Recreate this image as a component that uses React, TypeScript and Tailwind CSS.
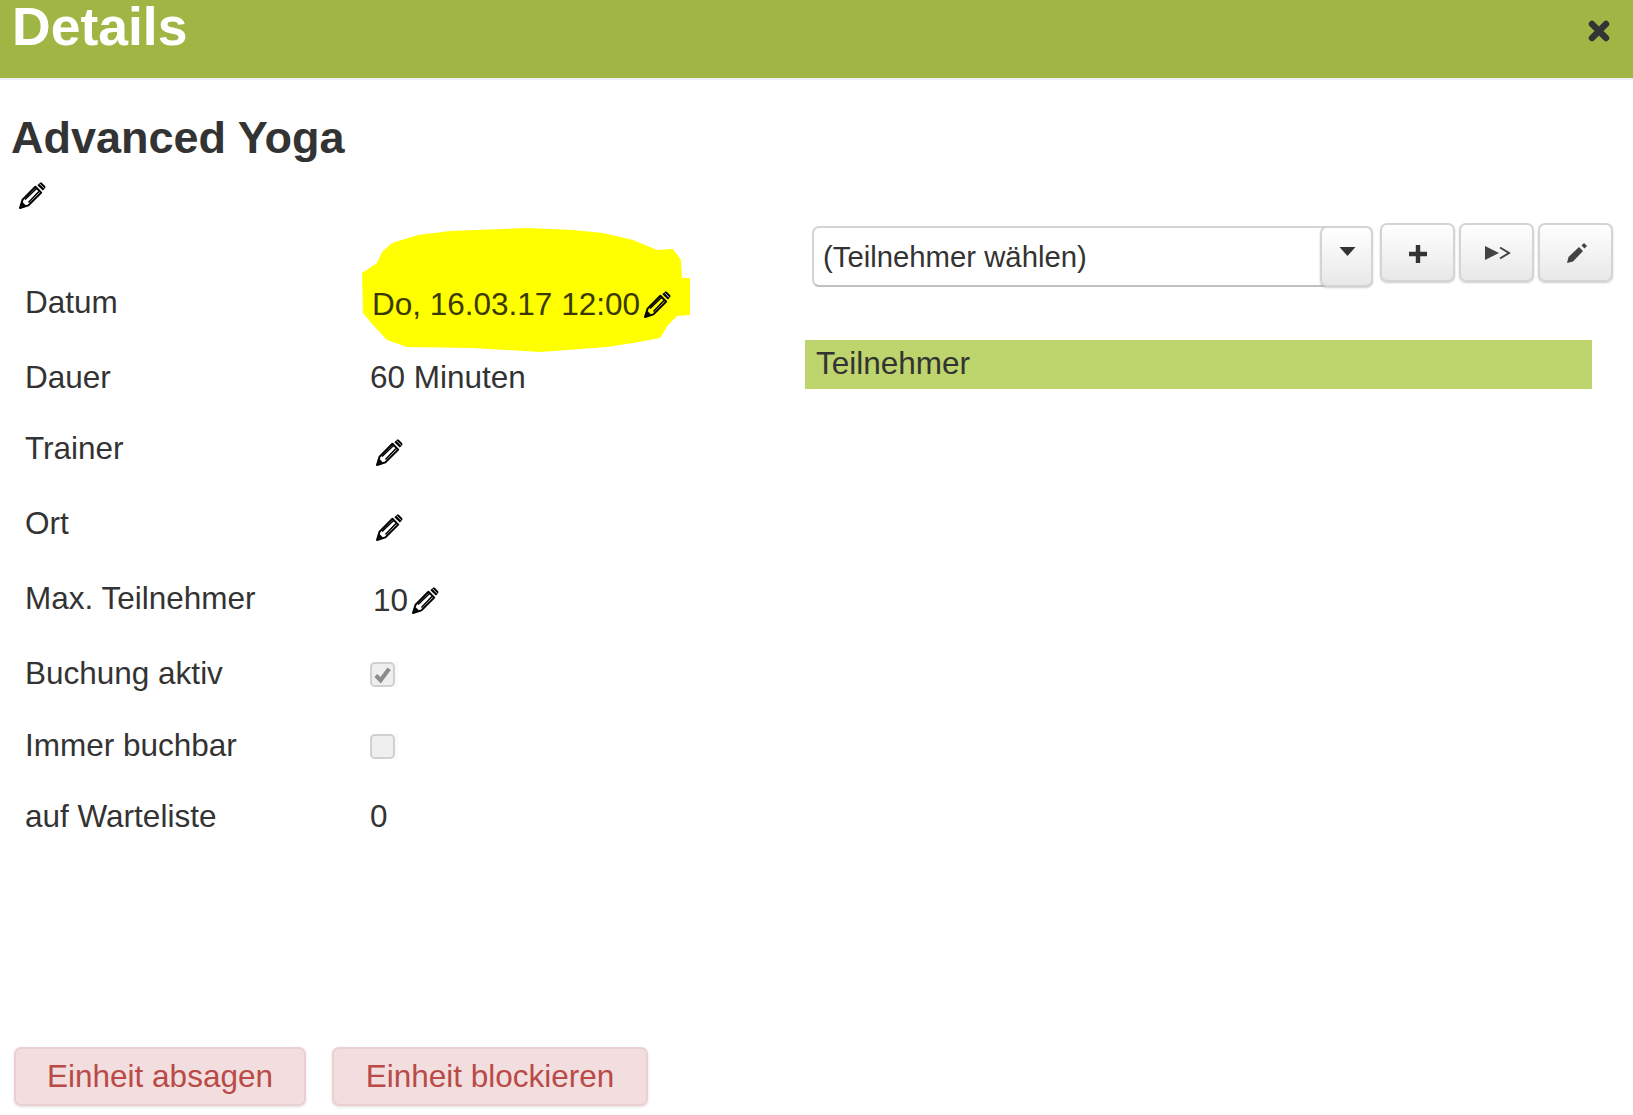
function Pencil({ className }: { className?: string }) {
  return (
    <svg viewBox="0 0 28 28" className={`w-[28px] h-[28px] shrink-0 ${className ?? ""}`}>
      <path d="M2 26 L4.6 17.6 L17.4 4.8 L23.2 10.6 L10.4 23.4 Z" fill="none" stroke="#000" strokeWidth="2" strokeLinejoin="round" />
      <path d="M7 17.5 L18.5 6.5 M10.5 20.5 L21 9.5" stroke="#000" strokeWidth="1.6" fill="none" />
      <path d="M3 25 L4.5 20 L8 23.5 Z" fill="#000" />
      <path d="M19.4 3.2 L21.6 1 C22.4 .4 23.2 .4 24 1 L27 4 C27.6 4.8 27.6 5.6 27 6.4 L24.8 8.6 Z" fill="#000" />
      <path d="M21.4 1.6 L26.4 6.6" stroke="#fff" strokeWidth=".8" />
    </svg>
  );
}

function Check({ on }: { on?: boolean }) {
  return (
    <div className="w-[28px] h-[25px] mt-[2px] bg-[#fafafa]">
      <div className="w-[25px] h-[25px] rounded-[5px] border-2 border-[#d0d0d0] bg-[#efefef] flex items-center justify-center">
        {on && (
          <svg viewBox="0 0 20 20" className="w-[19px] h-[19px]">
            <path d="M3 11 L8 16 L17 4" fill="none" stroke="#8c8c8c" strokeWidth="4.4" />
          </svg>
        )}
      </div>
    </div>
  );
}

const toolBtn =
  "w-[75px] h-[59px] rounded-[7px] border-2 border-[#d4d4d4] bg-gradient-to-b from-white to-[#e8e8e8] shadow-[0_1px_2px_rgba(0,0,0,0.2)] flex items-center justify-center";

export default function App() {
  return (
    <div className="w-full h-[1115px] bg-white flex flex-col text-[#333] font-['Liberation_Sans',Arial,sans-serif] text-[31.5px] relative overflow-hidden">
      {/* Header */}
      <div className="h-[80px] shrink-0 bg-[#9fb645] border-b-2 border-[#eeeef3] flex items-start justify-between pl-[12px] pr-[23px]">
        <h1 className="text-[53.5px] font-bold text-white leading-[53px]">Details</h1>
        <svg viewBox="0 0 22 22" className="w-[22px] h-[22px] mt-[20px]">
          <path d="M4 4 L18 18 M18 4 L4 18" stroke="#333" strokeWidth="6.5" strokeLinecap="round" />
        </svg>
      </div>

      <div className="flex-1 flex flex-col">
        <div className="flex-1 flex">
          {/* Left column */}
          <div className="w-[805px] shrink-0 relative">
            <h2 className="text-[45px] font-bold leading-[50px] pl-[11px] mt-[33px]">Advanced Yoga</h2>
            <div className="pl-[18px] mt-[19px] h-[84px]">
              <Pencil />
            </div>

            {/* Yellow highlighter scribble, behind the rows */}
            <svg viewBox="0 0 380 190" className="absolute left-[340px] top-[130px] w-[380px] h-[190px]">
              <path
                d="M22 63 L37 53 L42 42 L52 33 L78 25 L110 21 L187 18 L233 20 L263 23 L293 30 L317 40 L333 39 L341 50 L342 68 L350 68 L350 105 L337 106 L328 115 L320 128 L293 133 L267 137 L200 142 L133 138 L67 137 L47 130 L33 115 L23 103 Z"
                fill="#ffff00"
              />
            </svg>

            <div className="flex flex-col pl-[25px] relative">
              <div className="h-[75px] flex items-center">
                <span className="w-[345px] pb-[2px]">Datum</span>
                <span className="pl-[2px] pt-[3px] text-[#3a3a00] flex items-center gap-[3px]">
                  Do, 16.03.17 12:00
                  <Pencil />
                </span>
              </div>
              <div className="h-[72px] flex items-center pt-[2px]">
                <span className="w-[345px]">Dauer</span>
                <span>60 Minuten</span>
              </div>
              <div className="h-[73px] flex items-center">
                <span className="w-[345px] pb-[1px]">Trainer</span>
                <span className="pl-[5px] pt-[6px]"><Pencil /></span>
              </div>
              <div className="h-[75px] flex items-center">
                <span className="w-[345px]">Ort</span>
                <span className="pl-[5px] pt-[8px]"><Pencil /></span>
              </div>
              <div className="h-[75px] flex items-center">
                <span className="w-[345px]">Max. Teilnehmer</span>
                <span className="pl-[3px] pt-[5px] flex items-center gap-[3px]">10<Pencil /></span>
              </div>
              <div className="h-[74px] flex items-center">
                <span className="w-[345px] pt-[2px]">Buchung aktiv</span>
                <Check on />
              </div>
              <div className="h-[71px] flex items-center">
                <span className="w-[345px]">Immer buchbar</span>
                <Check />
              </div>
              <div className="h-[71px] flex items-center">
                <span className="w-[345px]">auf Warteliste</span>
                <span>0</span>
              </div>
            </div>
          </div>

          {/* Right column */}
          <div className="flex-1 min-w-0 pt-[143px]">
            <div className="flex items-start pl-[7px] pr-[20px]">
              <div className="w-[561px] h-[61px] mt-[3px] rounded-[7px] border-2 border-[#d4d4d4] border-b-[#c0c0c0] flex items-stretch justify-between">
                <span className="pl-[9px] pt-[1px] flex items-center text-[29.3px]">(Teilnehmer wählen)</span>
                <div className="w-[53px] -mr-[2px] -my-[2px] rounded-[7px] border-2 border-[#d4d4d4] bg-gradient-to-b from-white to-[#e8e8e8] shadow-[0_1px_2px_rgba(0,0,0,0.2)] flex justify-center pt-[19px]">
                  <svg viewBox="0 0 16 9" className="w-[17px] h-[9px] ml-[2px]"><path d="M0 0 H16 L8 9 Z" fill="#333" /></svg>
                </div>
              </div>
              <div className="flex gap-[4px] ml-[7px]">
                <div className={toolBtn}>
                  <svg viewBox="0 0 20 20" className="w-[20px] h-[20px] mt-[3px]"><path d="M10 1 V19 M1 10 H19" stroke="#333" strokeWidth="4.4" /></svg>
                </div>
                <div className={toolBtn}>
                  <svg viewBox="0 0 26 14" className="w-[26px] h-[14px] ml-[2px]">
                    <path d="M0 0 L14 7 L0 14 Z" fill="#444" />
                    <path d="M15 1.5 L24 7 L15 12.5" fill="none" stroke="#444" strokeWidth="2" />
                  </svg>
                </div>
                <div className={toolBtn}>
                  <svg viewBox="0 0 22 22" className="w-[22px] h-[22px] ml-[2px]">
                    <path d="M1 21 L2.5 15 L13 5 L17 9 L7 19.5 Z" fill="#444" />
                    <path d="M15.5 3.5 L18 1 L21 4 L18.5 6.5 Z" fill="#444" />
                  </svg>
                </div>
              </div>
            </div>
            <div className="mt-[53px] w-[787px] h-[49px] bg-[#bdd56c] pl-[11px] pb-[1px] flex items-center">Teilnehmer</div>
          </div>
        </div>

        {/* Footer actions */}
        <div className="flex gap-[26px] pl-[14px] pb-[9px]">
          <button className="w-[292px] h-[59px] rounded-[7px] border-2 border-[#eccfd2] bg-[#f2dede] text-[#b94a48] shadow-[0_1px_3px_rgba(0,0,0,0.12)]">Einheit absagen</button>
          <button className="w-[316px] h-[59px] rounded-[7px] border-2 border-[#eccfd2] bg-[#f2dede] text-[#b94a48] shadow-[0_1px_3px_rgba(0,0,0,0.12)]">Einheit blockieren</button>
        </div>
      </div>
    </div>
  );
}
